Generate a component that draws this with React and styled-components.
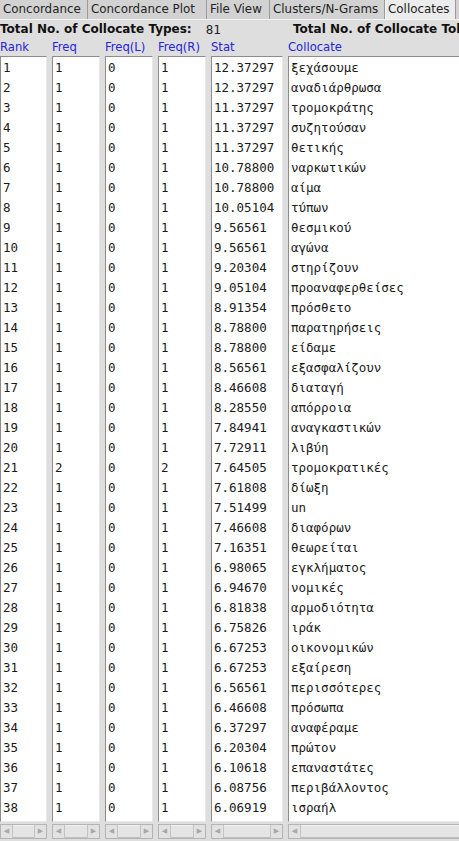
import { createGlobalStyle } from 'styled-components';
import styled from 'styled-components';

const rows = [
  [1, 1, 0, 1, '12.37297', 'ξεχάσουμε'],
  [2, 1, 0, 1, '12.37297', 'αναδιάρθρωσα'],
  [3, 1, 0, 1, '11.37297', 'τρομοκράτης'],
  [4, 1, 0, 1, '11.37297', 'συζητούσαν'],
  [5, 1, 0, 1, '11.37297', 'θετικής'],
  [6, 1, 0, 1, '10.78800', 'ναρκωτικών'],
  [7, 1, 0, 1, '10.78800', 'αίμα'],
  [8, 1, 0, 1, '10.05104', 'τύπων'],
  [9, 1, 0, 1, '9.56561', 'θεσμικού'],
  [10, 1, 0, 1, '9.56561', 'αγώνα'],
  [11, 1, 0, 1, '9.20304', 'στηρίζουν'],
  [12, 1, 0, 1, '9.05104', 'προαναφερθείσες'],
  [13, 1, 0, 1, '8.91354', 'πρόσθετο'],
  [14, 1, 0, 1, '8.78800', 'παρατηρήσεις'],
  [15, 1, 0, 1, '8.78800', 'είδαμε'],
  [16, 1, 0, 1, '8.56561', 'εξασφαλίζουν'],
  [17, 1, 0, 1, '8.46608', 'διαταγή'],
  [18, 1, 0, 1, '8.28550', 'απόρροια'],
  [19, 1, 0, 1, '7.84941', 'αναγκαστικών'],
  [20, 1, 0, 1, '7.72911', 'λιβύη'],
  [21, 2, 0, 2, '7.64505', 'τρομοκρατικές'],
  [22, 1, 0, 1, '7.61808', 'δίωξη'],
  [23, 1, 0, 1, '7.51499', 'un'],
  [24, 1, 0, 1, '7.46608', 'διαφόρων'],
  [25, 1, 0, 1, '7.16351', 'θεωρείται'],
  [26, 1, 0, 1, '6.98065', 'εγκλήματος'],
  [27, 1, 0, 1, '6.94670', 'νομικές'],
  [28, 1, 0, 1, '6.81838', 'αρμοδιότητα'],
  [29, 1, 0, 1, '6.75826', 'ιράκ'],
  [30, 1, 0, 1, '6.67253', 'οικονομικών'],
  [31, 1, 0, 1, '6.67253', 'εξαίρεση'],
  [32, 1, 0, 1, '6.56561', 'περισσότερες'],
  [33, 1, 0, 1, '6.46608', 'πρόσωπα'],
  [34, 1, 0, 1, '6.37297', 'αναφέραμε'],
  [35, 1, 0, 1, '6.20304', 'πρώτον'],
  [36, 1, 0, 1, '6.10618', 'επαναστάτες'],
  [37, 1, 0, 1, '6.08756', 'περιβάλλοντος'],
  [38, 1, 0, 1, '6.06919', 'ισραήλ'],
];

const columns = [
  { title: 'Rank', width: 47 },
  { title: 'Freq', width: 48 },
  { title: 'Freq(L)', width: 48 },
  { title: 'Freq(R)', width: 48 },
  { title: 'Stat', width: 72 },
  { title: 'Collocate', width: 200 },
];

const tabs = [
  { label: 'Concordance', width: 88 },
  { label: 'Concordance Plot', width: 119 },
  { label: 'File View', width: 63 },
  { label: 'Clusters/N-Grams', width: 115 },
  { label: 'Collocates', width: 71 },
];

export default function App() {
  return (
    <Window>
      <GlobalStyle />
      <TabBar>
        {tabs.map((t) => (
          <Tab key={t.label} width={t.width} selected={t.label === 'Collocates'}>
            {t.label}
          </Tab>
        ))}
      </TabBar>
      <Panel>
        <Totals>
          <TotalGroup>
            <TotalLabel>Total No. of Collocate Types:</TotalLabel>
            <TotalValue>81</TotalValue>
          </TotalGroup>
          <TotalGroup>
            <TotalLabel>Total No. of Collocate Tokens:</TotalLabel>
            <TotalValue>86</TotalValue>
          </TotalGroup>
        </Totals>
        <Columns>
          {columns.map((col, ci) => (
            <Column key={col.title} width={col.width}>
              <Header>{col.title}</Header>
              <ListBox>
                {rows.map((r) => (
                  <Row key={r[0]}>{r[ci]}</Row>
                ))}
              </ListBox>
              <HScroll>
                <ScrollButton>◀</ScrollButton>
                <Track />
                <ScrollButton>▶</ScrollButton>
              </HScroll>
            </Column>
          ))}
        </Columns>
      </Panel>
    </Window>
  );
}

const GlobalStyle = createGlobalStyle`
  body {
    margin: 0;
    background: #dedede;
    overflow: hidden;
  }
`;

const Window = styled.div`
  width: 459px;
  height: 841px;
  overflow: hidden;
  background: #dedede;
  font-family: "DejaVu Sans", sans-serif;
`;

const TabBar = styled.div`
  display: flex;
  height: 19px;
  background: #d2d2d2;
  border-bottom: 1px solid #f4f4f4;
`;

const Tab = styled.div`
  flex-shrink: 0;
  box-sizing: border-box;
  width: ${(p) => p.width}px;
  padding-left: 2px;
  font-size: 11.9px;
  line-height: 19px;
  color: #222;
  white-space: nowrap;
  overflow: hidden;
  background: ${(p) => (p.selected ? '#ececec' : '#d2d2d2')};
  border-right: 1px solid #9a9a9a;
  border-left: 1px solid ${(p) => (p.selected ? '#fafafa' : 'transparent')};
`;

const Panel = styled.div`
  display: flex;
  flex-direction: column;
`;

const Totals = styled.div`
  display: flex;
  height: 18px;
  align-items: center;
  overflow: hidden;
`;

const TotalGroup = styled.div`
  display: flex;
  flex-shrink: 0;
  width: 293px;
  white-space: nowrap;
`;

const TotalLabel = styled.span`
  font-weight: bold;
  font-size: 12px;
  color: #111;
`;

const TotalValue = styled.span`
  margin-left: 14px;
  font-family: "DejaVu Sans Mono", monospace;
  font-size: 12.5px;
  color: #222;
`;

const Columns = styled.div`
  display: flex;
  gap: 5px;
  padding-top: 1px;
`;

const Column = styled.div`
  display: flex;
  flex-direction: column;
  flex-shrink: 0;
  width: ${(p) => p.width}px;
`;

const Header = styled.div`
  height: 17px;
  font-size: 11.6px;
  line-height: 16px;
  color: #2424d8;
  white-space: nowrap;
`;

const ListBox = styled.div`
  height: 763px;
  background: #fff;
  border-top: 1px solid #8c8c8c;
  border-left: 1px solid #8c8c8c;
  border-right: 1px solid #e8e8e8;
  border-bottom: 1px solid #e8e8e8;
  padding-top: 1px;
  overflow: hidden;
`;

const Row = styled.div`
  height: 20px;
  line-height: 20px;
  padding-left: 2px;
  font-family: "DejaVu Sans Mono", monospace;
  font-size: 12.5px;
  color: #1a1a1a;
  white-space: nowrap;
`;

const HScroll = styled.div`
  display: flex;
  height: 13px;
  margin-top: 2px;
  border: 1px solid #b4b4b4;
  background: #d8d8d8;
  overflow: hidden;
`;

const ScrollButton = styled.div`
  width: 11px;
  flex-shrink: 0;
  font-size: 7px;
  line-height: 13px;
  text-align: center;
  color: #a8a8a8;
  background: #e2e2e2;
  border-right: 1px solid #c4c4c4;
  &:last-child {
    border-right: none;
    border-left: 1px solid #c4c4c4;
  }
`;

const Track = styled.div`
  flex: 1;
  background: #e4e4e4;
  border-top: 1px solid #f2f2f2;
  border-bottom: 1px solid #c0c0c0;
`;
